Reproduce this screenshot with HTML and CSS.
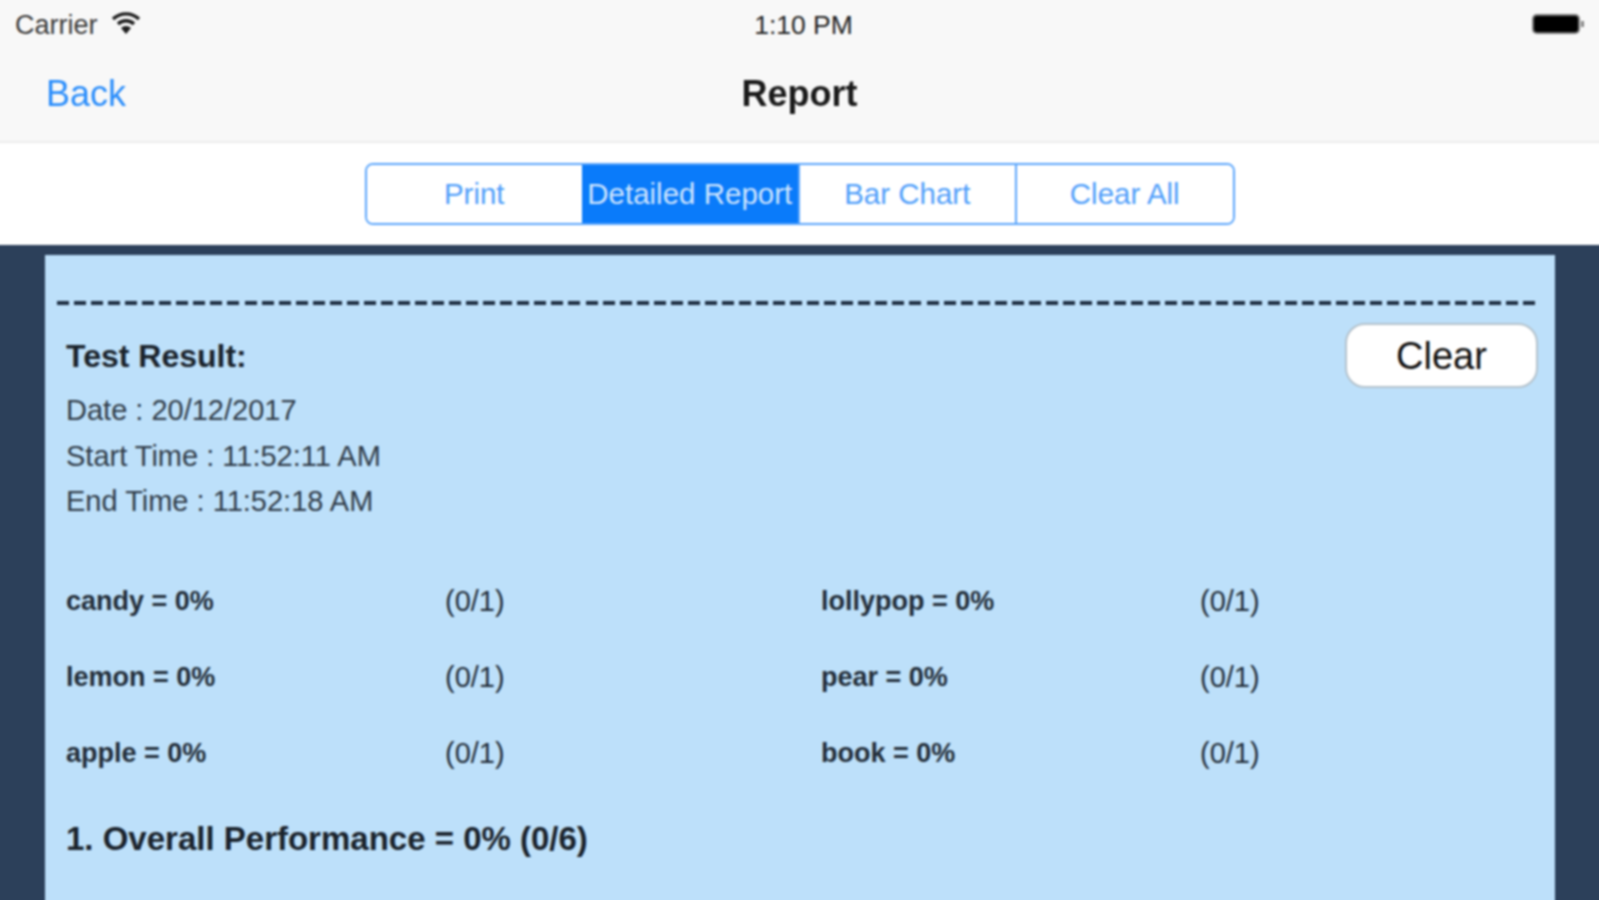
FILE: index.html
```html
<!DOCTYPE html>
<html>
  <head>
    <title>Report</title>
    <link rel="stylesheet" href="styles.css">
  </head>
  <body>
    <div class="app">
      <header class="top-bar">
        <div class="status-bar">
          <div class="status-left">
            <span class="carrier">Carrier</span>
            <svg class="wifi" width="32" height="24" viewBox="0 0 32 24">
              <path d="M16 23l-5-6a7 7 0 0 1 10 0z" fill="#1c1c1c"/>
              <path d="M8 13a11.5 11.5 0 0 1 16 0" fill="none" stroke="#1c1c1c" stroke-width="3.4"/>
              <path d="M3 8a19 19 0 0 1 26 0" fill="none" stroke="#1c1c1c" stroke-width="3.4"/>
            </svg>
          </div>
          <span class="clock">1:10 PM</span>
          <div class="battery">
            <div class="battery-body"></div>
            <div class="battery-tip"></div>
          </div>
        </div>
        <div class="nav-bar">
          <a class="back-link">Back</a>
          <h1 class="nav-title">Report</h1>
        </div>
      </header>

      <div class="toolbar">
        <div class="segmented">
          <button class="segment">Print</button>
          <button class="segment segment-active">Detailed Report</button>
          <button class="segment">Bar Chart</button>
          <button class="segment">Clear All</button>
        </div>
      </div>

      <main class="content">
        <section class="report-panel">
          <div class="dashed-line"></div>
          <div class="report-head">
            <div class="report-info">
              <h2 class="report-title">Test Result:</h2>
              <p class="info-line">Date : 20/12/2017</p>
              <p class="info-line">Start Time : 11:52:11 AM</p>
              <p class="info-line">End Time : 11:52:18 AM</p>
            </div>
            <button class="clear-button">Clear</button>
          </div>

          <div class="score-grid">
            <span class="score-name">candy = 0%</span>
            <span class="score-count">(0/1)</span>
            <span class="score-name">lollypop = 0%</span>
            <span class="score-count">(0/1)</span>
            <span class="score-name">lemon = 0%</span>
            <span class="score-count">(0/1)</span>
            <span class="score-name">pear = 0%</span>
            <span class="score-count">(0/1)</span>
            <span class="score-name">apple = 0%</span>
            <span class="score-count">(0/1)</span>
            <span class="score-name">book = 0%</span>
            <span class="score-count">(0/1)</span>
          </div>

          <p class="overall">1. Overall Performance = 0% (0/6)</p>
        </section>
      </main>
    </div>
  </body>
</html>
```

FILE: styles.css
```css
html,
body {
  height: 100%;
  margin: 0;
  overflow: hidden;
}

body {
  font-family: "Liberation Sans", Arial, sans-serif;
  color: #1f2933;
  background-color: #2c405a;
}

/* the whole shot is a soft upscale, bars run 10px past the window so the blur has no edge */
.app {
  display: flex;
  flex-direction: column;
  width: 1619px;
  height: 920px;
  margin: -10px 0 0 -10px;
  filter: blur(1.1px);
}

.top-bar {
  height: 141px;
  padding: 10px 10px 0;
  background-color: #f8f8f8;
  border-bottom: 2px solid #ececec;
}

.status-bar {
  display: grid;
  grid-template-columns: 1fr auto 1fr;
  align-items: center;
  height: 50px;
  padding: 0 15px;
}

.status-left {
  display: flex;
  align-items: center;
  gap: 12px;
}

.carrier {
  font-size: 27px;
  color: #3a3a3a;
}

.wifi {
  margin-top: -4px;
}

.clock {
  margin-left: 8px;
  font-size: 26.5px;
  color: #222;
}

.battery {
  display: flex;
  align-items: center;
  justify-content: flex-end;
  margin-top: -3px;
}

.battery-body {
  width: 44px;
  height: 16px;
  border-radius: 3px;
  background-color: #000;
  box-shadow: 0 0 0 2px #777;
}

.battery-tip {
  width: 3px;
  height: 6px;
  margin-left: 3px;
  background-color: #888;
}

.nav-bar {
  display: flex;
  align-items: center;
  justify-content: center;
  position: relative;
  height: 88px;
}

.back-link {
  position: absolute;
  left: 46px;
  font-size: 36px;
  color: #2a8dfb;
}

.nav-title {
  margin: 0;
  font-size: 36px;
  font-weight: 700;
  color: #1a1a1a;
}

.toolbar {
  display: flex;
  align-items: center;
  justify-content: center;
  height: 102px;
  background-color: #fff;
}

.segmented {
  display: flex;
  width: 870px;
  height: 62px;
  box-sizing: border-box;
  border: 2px solid #5aa5fb;
  border-radius: 8px;
  overflow: hidden;
}

.segment {
  flex: 1;
  padding: 0;
  border: none;
  border-right: 2px solid #5aa5fb;
  background-color: #fff;
  color: #4f9efa;
  font-family: inherit;
  font-size: 29.5px;
  white-space: nowrap;
}

.segment:last-child {
  border-right: none;
}

.segment-active {
  margin-left: -2px;
  background-color: #0a7bfa;
  color: #cfe5fe;
}

.content {
  flex: 1;
  padding: 10px 54px 0 55px;
}

.report-panel {
  box-sizing: border-box;
  height: 100%;
  padding: 46px 17px 0 12px;
  background-color: #bde0fa;
}

.dashed-line {
  height: 4px;
  margin-right: 3px;
  background-image: repeating-linear-gradient(to right, #1f2f43 0, #1f2f43 12px, transparent 12px, transparent 17.05px);
}

.report-head {
  display: flex;
  align-items: flex-start;
  justify-content: space-between;
  padding: 18px 0 0 9px;
}

.report-title {
  margin: 15px 0 14px;
  font-size: 32px;
  line-height: 36px;
  font-weight: 700;
  color: #1a232c;
}

.info-line {
  margin: 0;
  font-size: 29px;
  line-height: 45.5px;
  color: #303c49;
}

.clear-button {
  width: 193px;
  height: 65px;
  padding: 2px 0 0;
  border: 2px solid #b4c2cc;
  border-radius: 20px;
  background-color: #fff;
  color: #111;
  font-family: inherit;
  font-size: 38px;
}

.score-grid {
  display: grid;
  grid-template-columns: 379px 376px 379px 1fr;
  grid-auto-rows: 76px;
  align-items: center;
  margin-top: 39px;
  padding-left: 9px;
}

.score-name {
  font-size: 27px;
  font-weight: 700;
  color: #232e3a;
}

.score-count {
  font-size: 29px;
  color: #232e3a;
}

.overall {
  margin: 27px 0 0 9px;
  font-size: 33px;
  line-height: 40px;
  font-weight: 700;
  color: #1a232c;
}
```
